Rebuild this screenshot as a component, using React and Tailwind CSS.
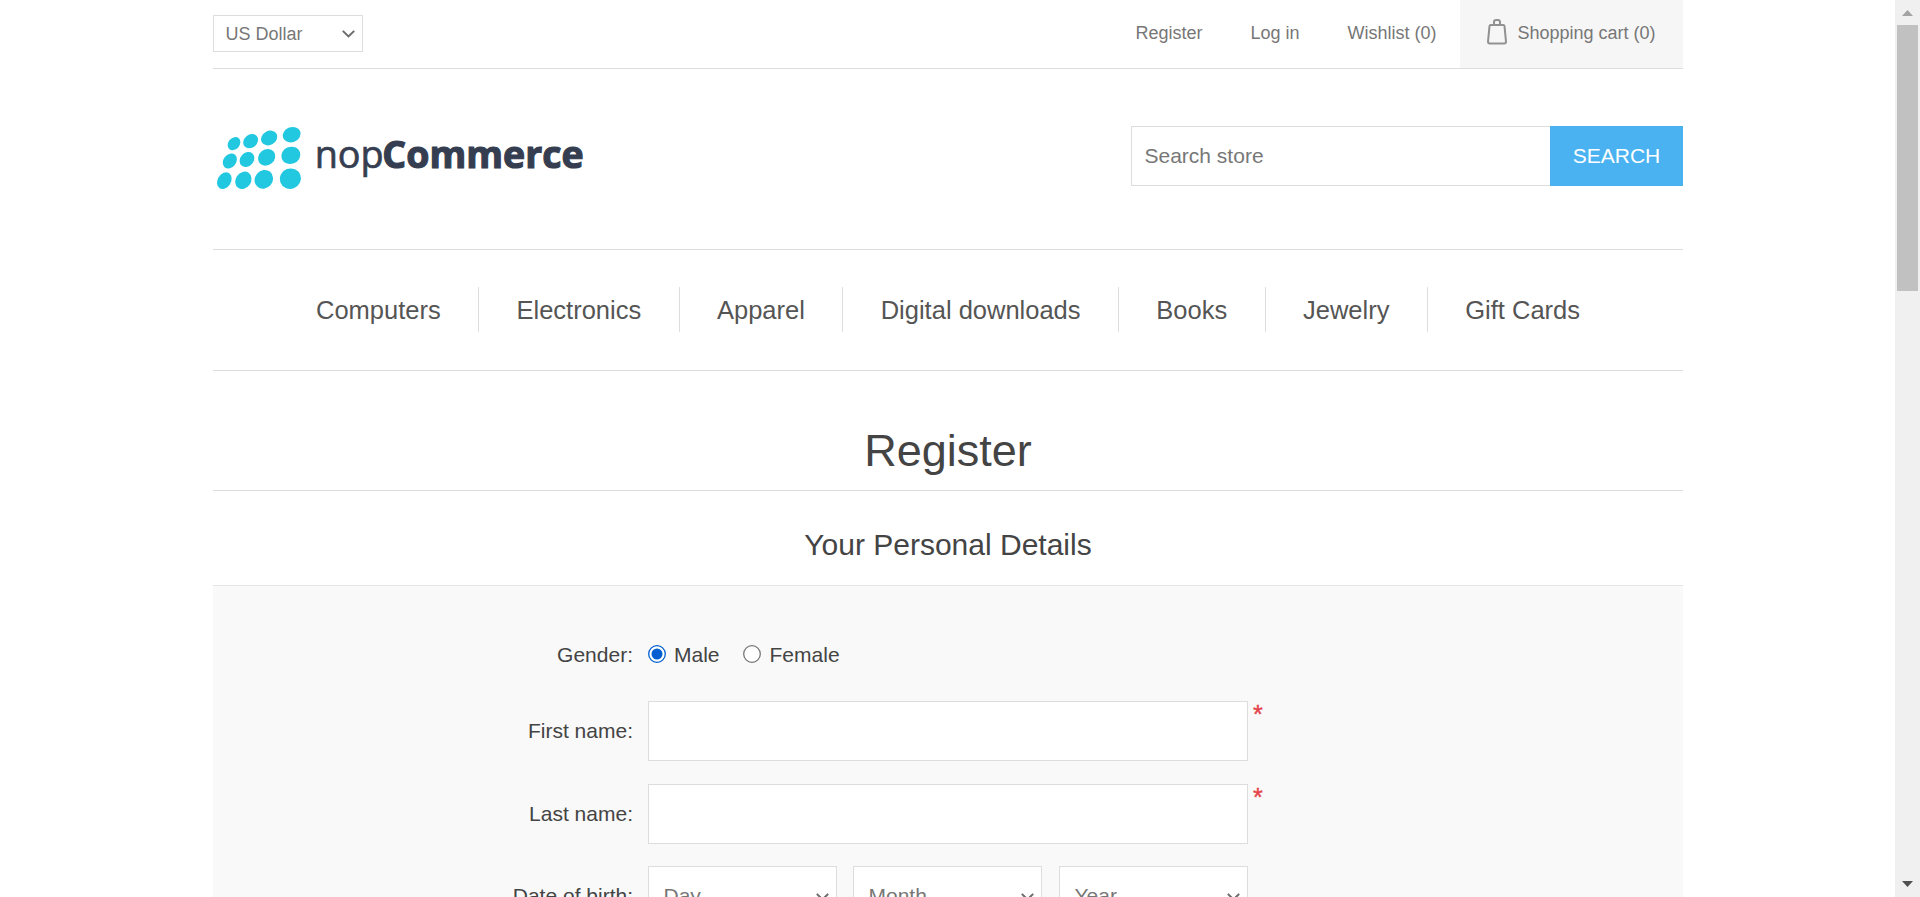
const navItems = ['Computers', 'Electronics', 'Apparel', 'Digital downloads', 'Books', 'Jewelry', 'Gift Cards'];

const logoDots = [
  [102, 431, 21.5, 17, -48], [152, 423.5, 24, 19.5, -40], [207.5, 414, 25.5, 21, -30], [275, 404, 27.5, 22.5, -20],
  [89.5, 483, 24.5, 19, -52], [141, 478.5, 24.5, 20, -48], [200, 472, 27.5, 23.5, -40], [272.5, 466, 29, 25.5, -20],
  [73, 542, 26.5, 20, -58], [130, 541, 27.5, 23, -55], [191.5, 538, 29.5, 26.5, -50], [271, 536, 32, 30.5, -20],
];

function Chevron({ className }) {
  return (
    <svg className={className} width="13" height="8" viewBox="0 0 13 8" fill="none" stroke="#6b6b6b" strokeWidth="2">
      <path d="M0.8 0.9 L6.5 6.4 L12.2 0.9" />
    </svg>
  );
}

function Logo() {
  return (
    <svg width="375" height="75" viewBox="39 360 1125 225" className="mt-[51px]">
      <g fill="#21c8e0">
        {logoDots.map(([x, y, rx, ry, a]) => (
          <ellipse key={`${x}-${y}`} cx={x} cy={y} rx={rx} ry={ry} transform={`rotate(${a} ${x} ${y})`} />
        ))}
      </g>
      <g fill="#353e50" stroke="#353e50" fontFamily="'Open Sans', 'Noto Sans', sans-serif" fontSize="114">
        <text x="344" y="503" strokeWidth="2" textLength="207" lengthAdjust="spacingAndGlyphs">nop</text>
        <text x="547" y="503" fontWeight="700" strokeWidth="3.5" textLength="604" lengthAdjust="spacingAndGlyphs">Commerce</text>
      </g>
    </svg>
  );
}

function BagIcon() {
  return (
    <svg width="20" height="27" viewBox="0 0 20 27" fill="none" stroke="#919191" strokeWidth="2" strokeLinejoin="round">
      <path d="M3.8 7 H16.2 Q17.4 7 17.5 8.2 L19 23.6 Q19 25.6 17.2 25.6 H2.8 Q1 25.6 1 23.6 L2.5 8.2 Q2.6 7 3.8 7 Z" />
      <path d="M7 6.8 V4.2 Q7 2 9.2 2 H10.8 Q13 2 13 4.2 V6.8" />
    </svg>
  );
}

function Radio({ checked }) {
  return (
    <svg width="18" height="18" viewBox="0 0 18 18" className="-mt-[3px]">
      <circle cx="9" cy="9" r="8.3" fill="#fff" stroke={checked ? '#005fd0' : '#767676'} strokeWidth="1.3" />
      {checked && <circle cx="9" cy="9" r="5.5" fill="#005fd0" />}
    </svg>
  );
}

function Label({ children }) {
  return <div className="w-[420px] shrink-0 text-right">{children}</div>;
}

function TextRow({ label }) {
  return (
    <div className="mb-[23px] flex h-[60px] items-center">
      <Label>{label}</Label>
      <div className="ml-[15px] h-[60px] w-[600px] border border-[#ddd] bg-white" />
      <span className="ml-[5px] h-full text-[25px] leading-[26px] text-[#e4434b] [-webkit-text-stroke:0.4px_#e4434b]">*</span>
    </div>
  );
}

function DateSelect({ children }) {
  return (
    <div className="flex h-[60px] w-[189px] items-center justify-between border border-[#ddd] bg-white pr-[7px] pl-[14.5px] text-[#777]">
      <span>{children}</span>
      <Chevron className="mt-[2px]" />
    </div>
  );
}

export default function App() {
  return (
    <div className="flex h-[897px] w-[1920px] overflow-hidden bg-white font-['Liberation_Sans',Arial,sans-serif] text-[#444]">
      <div className="w-[1895px] shrink-0">
        <div className="ml-[213px] w-[1470px]">
          <header>
            <div className="flex h-[69px] justify-between border-b border-[#ddd] text-[18px] text-[#777]">
              <div className="mt-[15px] flex h-[37px] w-[150px] items-center justify-between border border-[#ddd] pr-[7px] pl-[11.5px]">
                <span className="pt-px">US Dollar</span>
                <Chevron />
              </div>
              <div className="flex">
                <nav className="mr-[23.5px] flex gap-[48px] leading-[66px]">
                  <a>Register</a>
                  <a>Log in</a>
                  <a>Wishlist (0)</a>
                </nav>
                <a className="flex w-[223px] bg-[#f6f6f6] pl-[27px] leading-[66px]">
                  <span className="mt-[18px] mr-[10.5px]"><BagIcon /></span>
                  Shopping cart (0)
                </a>
              </div>
            </div>
            <div className="flex h-[181px] items-start justify-between border-b border-[#ddd]">
              <Logo />
              <div className="mt-[57px] flex h-[60px] text-[21px]">
                <div className="flex w-[419px] items-center border border-r-0 border-[#ddd] pl-[12.5px] text-[#777]">Search store</div>
                <button className="w-[133px] bg-[#4ab2f1] text-white">SEARCH</button>
              </div>
            </div>
          </header>
          <nav className="flex h-[121px] items-center justify-center border-b border-[#ddd] pb-px text-[25.5px] leading-[47px] text-[#555]">
            {navItems.map((item, i) => (
              <a key={item} className={i ? 'h-[45px] border-l border-[#ddd] px-[37.4px]' : 'h-[45px] px-[37.4px]'}>{item}</a>
            ))}
          </nav>
          <h1 className="h-[120px] border-b border-[#ddd] pt-[54px] text-center text-[45px] leading-[52px]">Register</h1>
          <h2 className="h-[94px] pt-[37px] text-center text-[30px] leading-[34px]">Your Personal Details</h2>
          <section className="h-[400px] border-t border-[#e5e5e5] bg-[#f9f9f9] pt-[56px] text-[21px] leading-[26px]">
            <div className="mb-[33px] flex h-[26px] items-center">
              <Label>Gender:</Label>
              <label className="ml-[15px] flex items-center gap-[8px]"><Radio checked />Male</label>
              <label className="ml-[23px] flex items-center gap-[9px]"><Radio />Female</label>
            </div>
            <TextRow label="First name:" />
            <TextRow label="Last name:" />
            <div className="-mt-px flex h-[60px] items-center">
              <Label>Date of birth:</Label>
              <div className="ml-[15px] flex w-[600px]">
                <DateSelect>Day</DateSelect>
                <div className="mr-[17px] ml-[16px]"><DateSelect>Month</DateSelect></div>
                <DateSelect>Year</DateSelect>
              </div>
            </div>
          </section>
        </div>
      </div>
      <div className="flex w-[25px] flex-col items-center bg-[#f0f0f0]">
        <svg width="11" height="6" viewBox="0 0 11 6" className="mt-[10px] mb-[9px] shrink-0"><path d="M0 6 L5.5 0 L11 6 Z" fill="#a3a3a3" /></svg>
        <div className="h-[266px] w-[21px] bg-[#c1c1c1]" />
        <svg width="11" height="6" viewBox="0 0 11 6" className="mt-auto mb-[10px] shrink-0"><path d="M0 0 L5.5 6 L11 0 Z" fill="#505050" /></svg>
      </div>
    </div>
  );
}
